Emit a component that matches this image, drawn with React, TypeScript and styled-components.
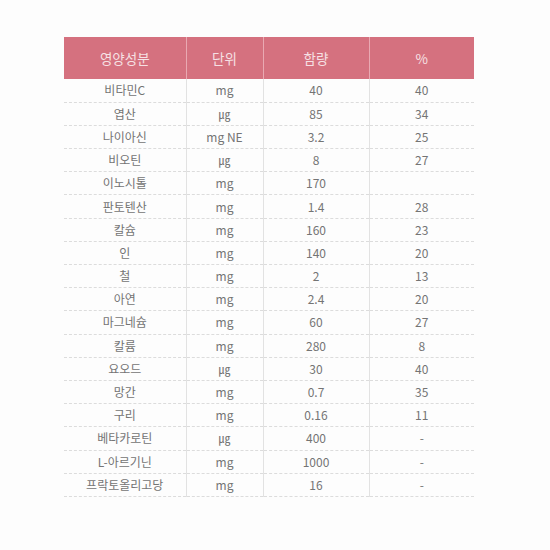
import styled, { createGlobalStyle } from "styled-components";

const GlobalStyle = createGlobalStyle`
  body {
    margin: 0;
    background: #fdfdfd;
    font-family: "Noto Sans CJK KR", "Noto Sans", sans-serif;
  }
`;

const Page = styled.div`
  width: 550px;
  height: 550px;
  padding: 37px 0 0 64px;
  box-sizing: border-box;
`;

const Table = styled.table`
  width: 410px;
  border-collapse: collapse;
  table-layout: fixed;
  color: #747474;
`;

const HeadCell = styled.th`
  height: 42px;
  padding: 0;
  background: #d5717f;
  color: #f6e0e4;
  font-weight: 400;
  font-size: 13.5px;
  text-align: center;
  border-left: 1px solid #e9a9b2;
  &:first-child {
    border-left: none;
  }
`;

const Row = styled.tr`
  height: 23.2px;
  border-bottom: 1px dashed #dcdcdc;
`;

const Cell = styled.td`
  padding: 0;
  font-size: 12px;
  font-weight: 400;
  text-align: center;
  border-left: 1px solid #e2e2e2;
  line-height: 1;
  &:first-child {
    border-left: none;
  }
`;

type Nutrient = [string, string, string, string];

const rows: Nutrient[] = [
  ["비타민C", "mg", "40", "40"],
  ["엽산", "㎍", "85", "34"],
  ["나이아신", "mg NE", "3.2", "25"],
  ["비오틴", "㎍", "8", "27"],
  ["이노시톨", "mg", "170", ""],
  ["판토텐산", "mg", "1.4", "28"],
  ["칼슘", "mg", "160", "23"],
  ["인", "mg", "140", "20"],
  ["철", "mg", "2", "13"],
  ["아연", "mg", "2.4", "20"],
  ["마그네슘", "mg", "60", "27"],
  ["칼륨", "mg", "280", "8"],
  ["요오드", "㎍", "30", "40"],
  ["망간", "mg", "0.7", "35"],
  ["구리", "mg", "0.16", "11"],
  ["베타카로틴", "㎍", "400", "-"],
  ["L-아르기닌", "mg", "1000", "-"],
  ["프락토올리고당", "mg", "16", "-"],
];

export default function App() {
  return (
    <>
      <GlobalStyle />
      <Page>
        <Table>
          <colgroup>
            <col style={{ width: 122 }} />
            <col style={{ width: 77 }} />
            <col style={{ width: 106 }} />
            <col style={{ width: 105 }} />
          </colgroup>
          <thead>
            <tr>
              <HeadCell>영양성분</HeadCell>
              <HeadCell>단위</HeadCell>
              <HeadCell>함량</HeadCell>
              <HeadCell>%</HeadCell>
            </tr>
          </thead>
          <tbody>
            {rows.map((r) => (
              <Row key={r[0]}>
                {r.map((v, i) => (
                  <Cell key={i}>{v}</Cell>
                ))}
              </Row>
            ))}
          </tbody>
        </Table>
      </Page>
    </>
  );
}
